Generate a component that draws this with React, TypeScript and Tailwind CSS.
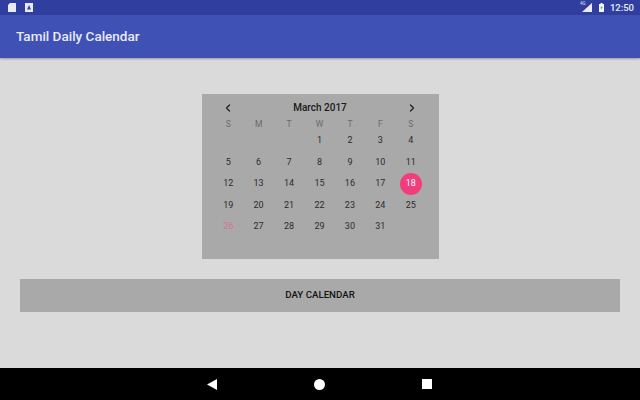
import { ChevronLeft, ChevronRight } from 'lucide-react'

const WEEK_DAYS = ['S', 'M', 'T', 'W', 'T', 'F', 'S']
const DAYS: (number | null)[] = [
  null, null, null, 1, 2, 3, 4,
  5, 6, 7, 8, 9, 10, 11,
  12, 13, 14, 15, 16, 17, 18,
  19, 20, 21, 22, 23, 24, 25,
  26, 27, 28, 29, 30, 31, null,
]

function StatusBar() {
  return (
    <div className="h-[15px] shrink-0 bg-[#303f9f] flex items-center pl-[8px] pr-[6px] text-white">
      <svg width="8" height="9" viewBox="0 0 8 9" className="fill-white/90">
        <path d="M2 0h6v9H0V2z" />
      </svg>
      <svg width="8" height="9" viewBox="0 0 8 9" className="ml-[9px]">
        <path d="M0 0h8v9H0z" fill="#e8eaf6" />
        <path d="M4 2l2 4.5H2z" fill="#303f9f" />
      </svg>
      <div className="relative ml-auto">
        <svg width="10" height="9" viewBox="0 0 10 9" className="block fill-white/90">
          <path d="M10 0v9H0z" />
        </svg>
        <span className="absolute left-[-2px] top-[-1px] text-[4.5px] leading-none text-white/80">4G</span>
      </div>
      <svg width="5" height="9" viewBox="0 0 5 9" className="ml-[7px]">
        <path d="M1.5 0h2v1H5v8H0V1h1.5z" fill="#f5f5f5" />
        <path d="M2.9 2.5L1.3 5.2h1L2.1 7l1.6-2.8h-1z" fill="#4caf50" />
      </svg>
      <span className="ml-[6px] pt-[1px] text-[9.5px] leading-none font-medium text-white/90">12:50</span>
    </div>
  )
}

function CalendarCard() {
  return (
    <div className="w-[237px] h-[165px] bg-[#a9a9a9] pl-[11.5px] pr-[12.5px] pt-[5px]">
      <div className="h-[17px] flex items-center justify-between pl-[9px] pr-[8px]">
        <ChevronLeft size={12} strokeWidth={2.4} className="text-[#1c1c1c]" />
        <span className="text-[10px] font-medium text-[#1a1a1a]">March 2017</span>
        <ChevronRight size={12} strokeWidth={2.4} className="text-[#1c1c1c]" />
      </div>
      <div className="grid grid-cols-7 h-[17px] items-center text-center text-[8.5px] text-[#6b6b6b]">
        {WEEK_DAYS.map((d, i) => (
          <span key={i}>{d}</span>
        ))}
      </div>
      <div className="grid grid-cols-7 auto-rows-[21.6px] mt-[-3px] items-center justify-items-center text-[9px] text-[#2b2b2b]">
        {DAYS.map((d, i) => {
          if (d === 18) {
            return (
              <span key={i} className="w-[22px] h-[22px] rounded-full bg-[#f23d7c] text-white flex items-center justify-center">
                {d}
              </span>
            )
          }
          return (
            <span key={i} className={d === 26 ? 'text-[#d9709a]' : ''}>
              {d}
            </span>
          )
        })}
      </div>
    </div>
  )
}

export default function App() {
  return (
    <div className="w-[640px] h-[400px] overflow-hidden flex flex-col bg-[#dadada] font-['Roboto',sans-serif]">
      <StatusBar />
      <div className="h-[43px] shrink-0 bg-[#3f51b5] flex items-center pl-[16px] shadow-[0_1px_2px_rgba(0,0,0,0.3)]">
        <span className="text-[13.5px] font-medium text-[#e8eaf6]">Tamil Daily Calendar</span>
      </div>
      <div className="flex-1 flex flex-col items-center pt-[36px] px-[20px]">
        <CalendarCard />
        <div className="w-full h-[33px] mt-[20px] bg-[#a9a9a9] flex items-center justify-center text-[9.7px] font-medium text-[#141414]">
          DAY CALENDAR
        </div>
      </div>
      <div className="h-[32px] shrink-0 bg-black flex items-center justify-center pr-[2px] text-white">
        <svg width="10" height="11" viewBox="0 0 10 11" className="mr-[97px] fill-white">
          <path d="M10 0v11L0 5.5z" />
        </svg>
        <svg width="11" height="11" viewBox="0 0 11 11" className="fill-white">
          <circle cx="5.5" cy="5.5" r="5.5" />
        </svg>
        <svg width="10" height="10" viewBox="0 0 10 10" className="ml-[97px] fill-white">
          <path d="M0 0h10v10H0z" />
        </svg>
      </div>
    </div>
  )
}
